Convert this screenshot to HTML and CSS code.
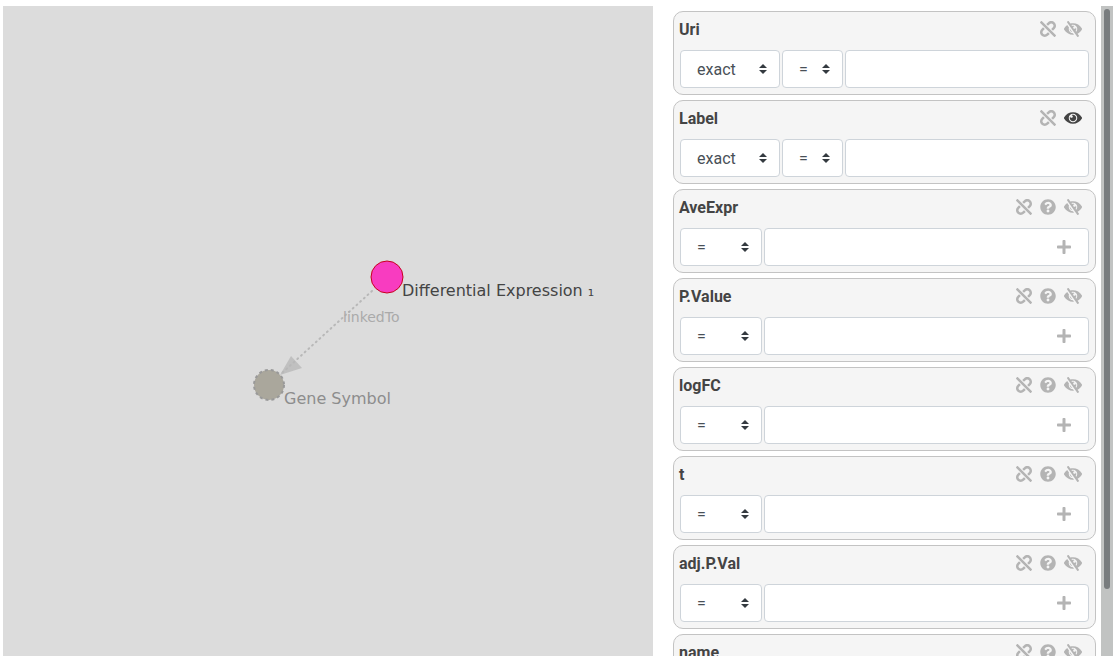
FILE: index.html
```html
<!DOCTYPE html>
<html lang="en">
<head>
<meta charset="utf-8">
<title>Query builder</title>
<link rel="stylesheet" href="styles.css">
<script src="app.js" defer></script>
</head>
<body>
<svg class="sprite" aria-hidden="true">
  <symbol id="unlink" viewBox="0 0 512 512"><path d="M304.083 405.907c4.686 4.686 4.686 12.284 0 16.971l-44.674 44.674c-59.263 59.262-155.693 59.266-214.961 0-59.264-59.265-59.264-155.696 0-214.96l44.675-44.675c4.686-4.686 12.284-4.686 16.971 0l39.598 39.598c4.686 4.686 4.686 12.284 0 16.971l-44.675 44.674c-28.072 28.073-28.072 73.75 0 101.823 28.072 28.072 73.75 28.073 101.824 0l44.674-44.674c4.686-4.686 12.284-4.686 16.971 0l39.597 39.598zm-56.568-260.216c4.686 4.686 12.284 4.686 16.971 0l44.674-44.674c28.072-28.075 73.75-28.073 101.824 0 28.072 28.073 28.072 73.75 0 101.823l-44.675 44.674c-4.686 4.686-4.686 12.284 0 16.971l39.598 39.598c4.686 4.686 12.284 4.686 16.971 0l44.675-44.675c59.263-59.265 59.263-155.695 0-214.96-59.266-59.264-155.695-59.264-214.961 0l-44.674 44.674c-4.686 4.686-4.686 12.284 0 16.971l39.597 39.598zm234.828 359.28l22.627-22.627c9.373-9.373 9.373-24.569 0-33.941L63.598 7.029c-9.373-9.373-24.569-9.373-33.941 0L7.029 29.657c-9.373 9.373-9.373 24.569 0 33.941l441.373 441.373c9.373 9.372 24.569 9.372 33.941 0z"/></symbol>
  <symbol id="help" viewBox="0 0 512 512"><path d="M504 256c0 136.997-111.043 248-248 248S8 392.997 8 256C8 119.083 119.043 8 256 8s248 111.083 248 248zM262.655 90c-54.497 0-89.255 22.957-116.549 63.758-3.536 5.286-2.353 12.415 2.715 16.258l34.699 26.31c5.205 3.947 12.621 3.008 16.665-2.122 17.864-22.658 30.113-35.797 57.303-35.797 20.429 0 45.698 13.148 45.698 32.958 0 14.976-12.363 22.667-32.534 33.976C247.128 238.528 216 254.941 216 296v4c0 6.627 5.373 12 12 12h56c6.627 0 12-5.373 12-12v-1.333c0-28.462 83.186-29.647 83.186-106.667 0-58.002-60.165-102-116.531-102zM256 338c-25.365 0-46 20.635-46 46 0 25.364 20.635 46 46 46s46-20.636 46-46c0-25.364-20.635-46-46-46z"/></symbol>
  <symbol id="eye" viewBox="0 0 576 512"><path d="M569.354 231.631C512.97 135.949 407.81 72 288 72 168.14 72 63.004 135.994 6.646 231.631a47.999 47.999 0 0 0 0 48.739C63.031 376.051 168.19 440 288 440c119.86 0 224.996-63.994 281.354-159.631a47.997 47.997 0 0 0 0-48.738zM288 392c-75.162 0-136-60.827-136-136 0-75.162 60.826-136 136-136 75.162 0 136 60.826 136 136 0 75.162-60.826 136-136 136zm104-136c0 57.438-46.562 104-104 104s-104-46.562-104-104c0-17.708 4.431-34.379 12.236-48.973l-.001.032c0 23.651 19.173 42.823 42.824 42.823s42.824-19.173 42.824-42.823c0-23.651-19.173-42.824-42.824-42.824l-.032.001C253.621 156.431 270.292 152 288 152c57.438 0 104 46.562 104 104z"/></symbol>
  <symbol id="eye-slash" viewBox="0 0 576 512"><path d="M286.693 391.984l32.579 46.542A333.958 333.958 0 0 1 288 440C168.19 440 63.031 376.051 6.646 280.369a47.999 47.999 0 0 1 0-48.739c24.023-40.766 56.913-75.775 96.024-102.537l57.077 81.539C154.736 224.82 152 240.087 152 256c0 74.736 60.135 135.282 134.693 135.984zm282.661-111.615c-31.667 53.737-78.747 97.46-135.175 125.475l.011.015 41.47 59.2c7.6 10.86 4.96 25.82-5.9 33.42l-13.11 9.18c-10.86 7.6-25.82 4.96-33.42-5.9L100.34 46.94c-7.6-10.86-4.96-25.82 5.9-33.42l13.11-9.18c10.86-7.6 25.82-4.96 33.42 5.9l51.038 72.617C230.68 75.776 258.905 72 288 72c119.81 0 224.969 63.949 281.354 159.631a48.002 48.002 0 0 1 0 48.738zM424 256c0-75.174-60.838-136-136-136-17.939 0-35.056 3.473-50.729 9.772l19.299 27.058c25.869-8.171 55.044-6.163 80.4 7.41h-.03c-23.65 0-42.82 19.17-42.82 42.82 0 23.626 19.147 42.82 42.82 42.82 23.65 0 42.82-19.17 42.82-42.82v-.03c18.462 34.49 16.312 77.914-8.25 110.95v.01l19.314 27.061C411.496 321.2 424 290.074 424 256zM262.014 356.727l-77.53-110.757c-5.014 52.387 29.314 98.354 77.53 110.757z"/></symbol>
  <symbol id="plus" viewBox="0 0 448 512"><path d="M416 208H272V64c0-17.67-14.33-32-32-32h-32c-17.67 0-32 14.33-32 32v144H32c-17.67 0-32 14.33-32 32v32c0 17.67 14.33 32 32 32h144v144c0 17.67 14.33 32 32 32h32c17.67 0 32-14.33 32-32V304h144c17.67 0 32-14.33 32-32v-32c0-17.67-14.33-32-32-32z"/></symbol>
</svg>
<main class="app">
  <section class="canvas" aria-label="Query graph">
    <svg class="graph" viewBox="0 0 650 650">
      <g class="edge">
        <path class="edge-arrow" d="M277 369l11-19 11 12z"/>
        <line class="edge-line" x1="369" y1="285" x2="279" y2="367"/>
        <text class="edge-label" x="340" y="316">linkedTo</text>
      </g>
      <g>
        <circle class="node node-optional" cx="266" cy="379" r="15"/>
        <text class="node-label node-label-optional" x="281" y="398">Gene Symbol</text>
      </g>
      <g>
        <circle class="node node-active" cx="384" cy="271" r="16"/>
        <text class="node-label" x="399" y="290">Differential Expression ₁</text>
      </g>
    </svg>
  </section>
  <aside class="panel">
    <div class="attributes" id="attributes"></div>
    <div class="track"><div class="thumb"></div></div>
  </aside>
</main>
</body>
</html>
```
FILE: styles.css
```css
* { box-sizing: border-box; }
body {
  margin: 0;
  background: #fff;
  color: #444;
  font: 16px/24px Roboto, sans-serif;
}
.sprite { display: none; }
.app {
  display: grid;
  grid-template-columns: minmax(0, 1fr) 440px;
  grid-template-rows: minmax(0, 1fr);
  gap: 20px;
  height: 100vh;
  padding: 6px 7px 6px 3px;
}
.canvas { background: #dcdcdc; }
.graph {
  display: block;
  width: 100%;
  height: 100%;
  font-family: "DejaVu Sans", sans-serif;
}
.edge-line { stroke: #b8b8b8; stroke-width: 2; stroke-linecap: round; stroke-dasharray: 1 4; }
.edge-arrow { fill: #c0c0c0; }
.edge-label { fill: #aaa; font-size: 14px; }
.node-active { fill: #f83cc0; stroke: #c8001e; stroke-width: 1; }
.node-optional { fill: #aaa79c; stroke: #999; stroke-width: 2; stroke-dasharray: 3 3; }
.node-label { fill: #444; font-size: 16px; }
.node-label-optional { fill: #8d8d8d; }

.panel { display: flex; gap: 5px; }
.attributes {
  display: flex;
  flex: 1;
  flex-direction: column;
  gap: 5px;
  padding-top: 5px;
  overflow-y: auto;
  scrollbar-width: none;
}
.track { width: 12px; padding: 3px; background: #c1c3c2; }
.thumb { height: 90%; border-radius: 3px; background: #787c7e; }

.card {
  flex: none;
  padding: 5px 6px 6px;
  border: 1px solid #c3c3c3;
  border-radius: 10px;
  background: #f5f5f5;
}
.card-head {
  display: flex;
  align-items: center;
  height: 24px;
  margin-bottom: 9px;
  padding-right: 7px;
}
.card-title {
  flex: 1;
  margin: 0 0 0 -1px;
  padding-top: 2px;
  font-size: 16px;
  font-weight: 700;
}
.icons { display: flex; gap: 8px; }
.icon-button {
  display: flex;
  padding: 0;
  border: 0;
  background: none;
  color: #b4b4b4;
  cursor: pointer;
}
.icon-button.on { color: #444; }
.icon { width: 16px; height: 16px; fill: currentColor; }
.icon-wide { width: 18px; }
.icon-narrow { width: 14px; }

.fields { display: grid; grid-template-columns: 82px 1fr; gap: 2px; }
.fields-text { grid-template-columns: 100px 61px 1fr; }
.select,
.value {
  min-width: 0;
  height: 38px;
  border: 1px solid #ced4da;
  border-radius: 4px;
  background-color: #fff;
}
.select {
  appearance: none;
  padding: 2px 28px 0 16px;
  color: #495057;
  font: inherit;
  background-image: url("data:image/svg+xml,%3Csvg xmlns='http://www.w3.org/2000/svg' viewBox='0 0 4 5'%3E%3Cpath fill='%23343a40' d='M2 0L0 2h4zm0 5L0 3h4z'/%3E%3C/svg%3E");
  background-repeat: no-repeat;
  background-position: right 12px center;
  background-size: 8px 10px;
}
.value { display: flex; align-items: center; }
.value-with-add { padding-right: 17px; }
.value-input {
  flex: 1;
  min-width: 0;
  height: 100%;
  padding: 0 12px;
  border: 0;
  background: none;
  color: #495057;
  font: inherit;
  outline: 0;
}
```
FILE: app.js
```js
const attributes = [
  { name: "Uri", text: true },
  { name: "Label", text: true, visible: true },
  { name: "AveExpr" },
  { name: "P.Value" },
  { name: "logFC" },
  { name: "t" },
  { name: "adj.P.Val" },
  { name: "name" }
];

const iconButton = (icon, label, size = "", state = "") =>
  `<button type="button" class="icon-button ${state}" aria-label="${label}">
    <svg class="icon ${size}"><use href="#${icon}"/></svg>
  </button>`;

const card = ({ name, text, visible }) => `
  <section class="card">
    <header class="card-head">
      <h2 class="card-title">${name}</h2>
      <div class="icons">
        ${iconButton("unlink", "Optional")}
        ${text ? "" : iconButton("help", "Help")}
        ${visible
          ? iconButton("eye", "Hide", "icon-wide", "on")
          : iconButton("eye-slash", "Show", "icon-wide")}
      </div>
    </header>
    <div class="fields ${text ? "fields-text" : ""}">
      ${text ? `<select class="select" aria-label="${name} match"><option>exact</option><option>regex</option></select>` : ""}
      <select class="select" aria-label="${name} operator"><option>=</option><option>≠</option></select>
      <div class="value ${text ? "" : "value-with-add"}">
        <input class="value-input" type="text" aria-label="${name} value">
        ${text ? "" : iconButton("plus", "Add value", "icon-narrow")}
      </div>
    </div>
  </section>`;

document.getElementById("attributes").innerHTML = attributes.map(card).join("");
```
